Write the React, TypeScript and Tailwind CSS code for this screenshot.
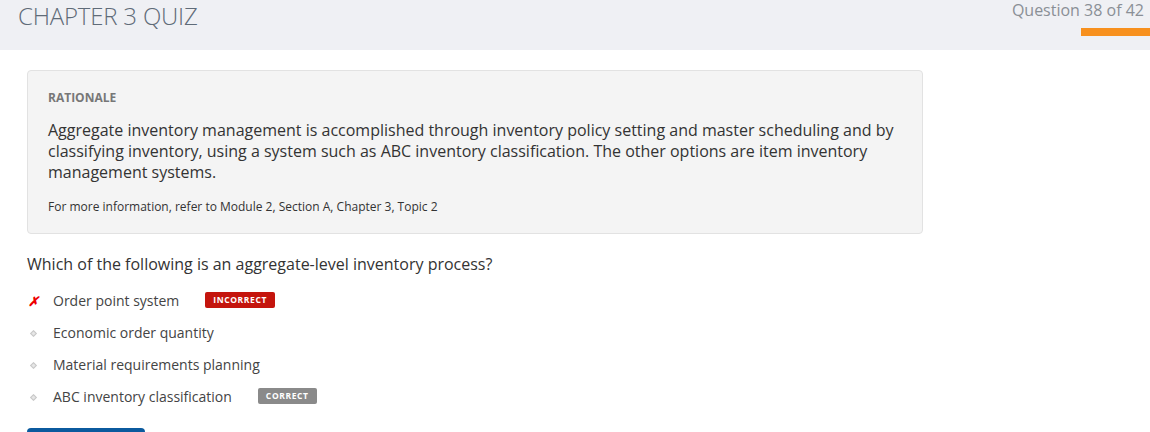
const options = [
  { text: "Order point system", state: "incorrect" },
  { text: "Economic order quantity", state: "" },
  { text: "Material requirements planning", state: "" },
  { text: "ABC inventory classification", state: "correct" },
];

export default function App() {
  return (
    <div className="w-[1150px] h-[432px] overflow-hidden bg-white font-['Open_Sans',sans-serif] text-[#333]">
      <header className="h-[50px] bg-[#eff0f4] flex justify-between">
        <h1 className="pl-[18px] pt-[1px] text-[24px] leading-[30px] font-light text-[#5f6b78] tracking-[-0.2px]">
          CHAPTER 3 QUIZ
        </h1>
        <div className="flex flex-col items-end">
          <div className="pr-[6px] text-[16px] leading-[21px] text-[#8a8f96]">Question 38 of 42</div>
          <div className="mt-[7px] w-[69px] h-[8px] bg-[#f7901e]" />
        </div>
      </header>

      <main className="px-[27px] pt-[20px]">
        <section className="w-[896px] bg-[#f4f4f4] border border-[#e2e2e2] rounded-[4px] px-[20px] pt-[19px] pb-[18px]">
          <div className="text-[12px] leading-[16px] font-bold text-[#777]">RATIONALE</div>
          <p className="mt-[14px] text-[16px] leading-[21px] text-[#333]">
            Aggregate inventory management is accomplished through inventory policy setting and master scheduling and by classifying inventory, using a system such as ABC inventory classification. The other options are item inventory management systems.
          </p>
          <p className="mt-[16px] text-[12px] leading-[16px] text-[#333]">
            For more information, refer to Module 2, Section A, Chapter 3, Topic 2
          </p>
        </section>

        <h2 className="mt-[19px] text-[16px] leading-[22px] text-[#333]">
          Which of the following is an aggregate-level inventory process?
        </h2>

        <ul className="mt-[16px] flex flex-col gap-[12px]">
          {options.map((o) => (
            <li key={o.text} className="flex items-center h-[20px]">
              <span className="w-[26px] flex justify-start pl-[1px]">
                {o.state === "incorrect" ? (
                  <span className="text-[13px] font-bold italic text-[#e00] leading-none">✗</span>
                ) : (
                  <span className="ml-[3px] w-[5px] h-[5px] rotate-45 border border-[#c8c8c8] bg-[#e6e6e6]" />
                )}
              </span>
              <span className="text-[14px] leading-[20px] text-[#444]">{o.text}</span>
              {o.state === "incorrect" && (
                <span className="ml-[26px] mb-[2px] h-[16px] px-[8px] rounded-[2px] bg-[#c4150d] text-white text-[8.5px] font-bold tracking-[0.6px] leading-[16px]">
                  INCORRECT
                </span>
              )}
              {o.state === "correct" && (
                <span className="ml-[26px] mb-[2px] h-[16px] px-[8px] rounded-[2px] bg-[#8a8a8a] text-white text-[8.5px] font-bold tracking-[0.6px] leading-[16px]">
                  CORRECT
                </span>
              )}
            </li>
          ))}
        </ul>

        <button className="mt-[21px] w-[118px] h-[32px] rounded-[4px] bg-[#0b5a9e] text-white text-[14px] leading-[32px]">
          <span className="invisible">Continue</span>
        </button>
      </main>
    </div>
  );
}
